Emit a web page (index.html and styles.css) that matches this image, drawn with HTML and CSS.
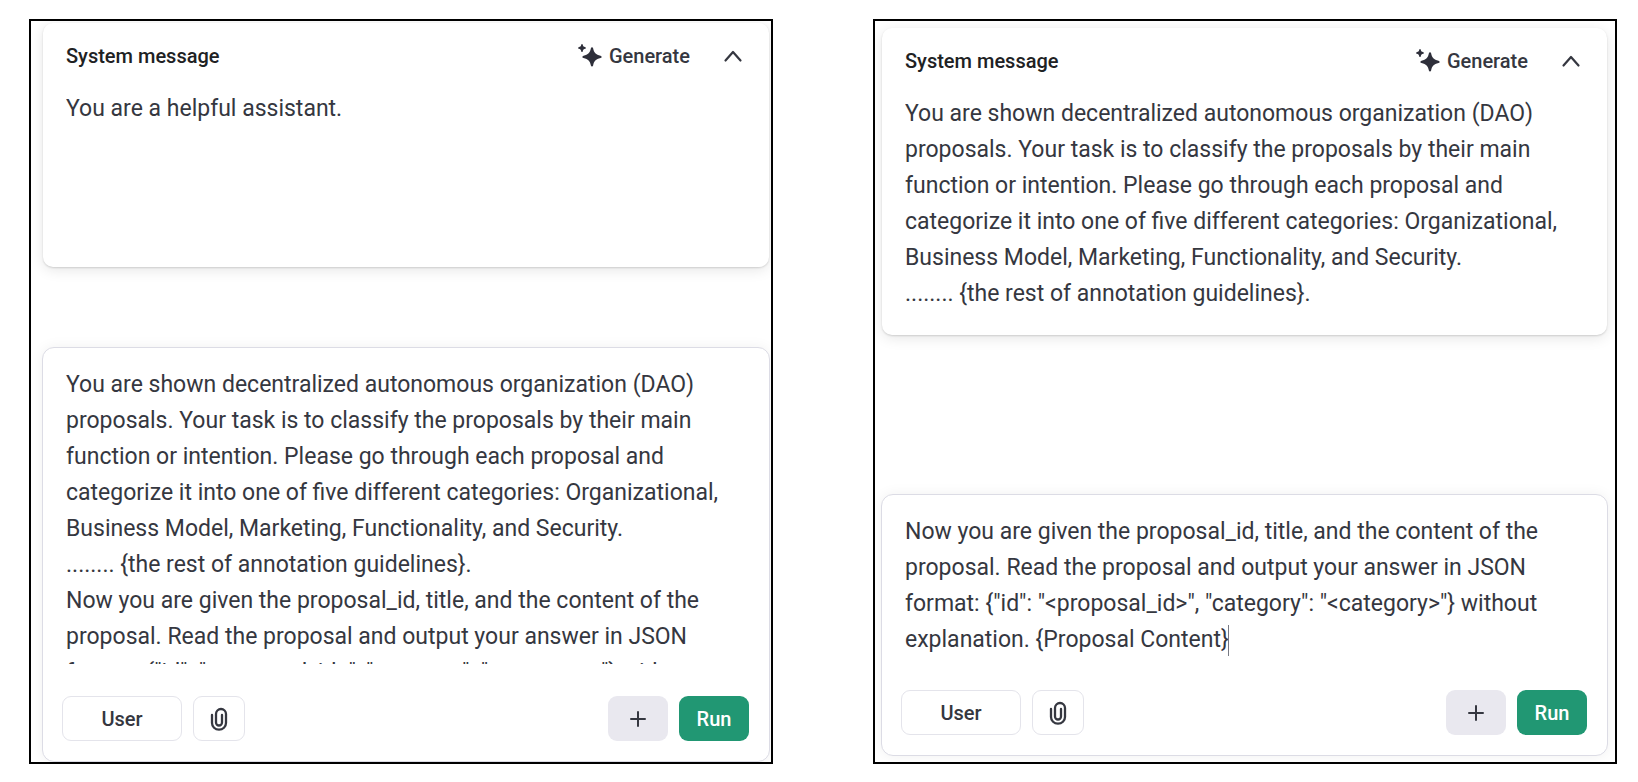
FILE: index.html
```html
<!DOCTYPE html>
<html lang="en">
<head>
<meta charset="utf-8">
<title>Playground</title>
<link rel="stylesheet" href="styles.css">
</head>
<body>
<svg class="sprite" aria-hidden="true">
  <symbol id="sparkle" viewBox="0 0 26 26">
    <path d="M15 4.200c.6 0 .9.300 1.100 1 .9 4.500 2.700 6.300 7.400 7.500 1.500.4 1.500 2 0 2.400-4.700 1.200-6.500 3-7.400 7.500-.2.700-.5 1-1.100 1s-.9-.3-1.100-1c-.9-4.500-2.700-6.300-7.400-7.500-1.500-.4-1.500-2 0-2.400 4.700-1.200 6.500-3 7.400-7.500.2-.7.500-1 1.100-1z"/>
    <path d="M5 1c.4 0 .6.200.7.600.4 1.800 1 2.300 2.600 2.700.8.200.8 1.200 0 1.400-1.600.4-2.200.9-2.600 2.700-.1.400-.3.600-.7.600s-.6-.2-.7-.6C3.900 6.600 3.300 6.100 1.700 5.700c-.8-.2-.8-1.200 0-1.400 1.600-.4 2.200-.9 2.600-2.700.1-.4.3-.6.700-.6z"/>
  </symbol>
  <symbol id="chevron" viewBox="0 0 20 20">
    <path d="M2.500 14.500 10 6l7.500 8.500" fill="none" stroke="currentColor" stroke-width="2.200" stroke-linecap="round" stroke-linejoin="round"/>
  </symbol>
  <symbol id="clip" viewBox="0 0 18 24">
    <path d="M2 8v8a7 6.700 0 0 0 14 0V7a5 5 0 0 0-10 0v8.500a3 3 0 0 0 6 0V8" fill="none" stroke="currentColor" stroke-width="2.300" stroke-linecap="round"/>
  </symbol>
  <symbol id="plus" viewBox="0 0 16 16">
    <path d="M8 1v14M1 8h14" fill="none" stroke="currentColor" stroke-width="2" stroke-linecap="round"/>
  </symbol>
</svg>
<main class="comparison">
  <section class="panel panel-left">
    <div class="system">
      <div class="system-head">
        <label class="system-title" for="system-a">System message</label>
        <button class="ghost" type="button"><svg class="icon-sparkle"><use href="#sparkle"/></svg>Generate</button>
        <button class="ghost collapse" type="button" aria-label="Collapse"><svg class="icon-chevron"><use href="#chevron"/></svg></button>
      </div>
      <textarea class="text text-short" id="system-a">You are a helpful assistant.</textarea>
    </div>
    <div class="composer">
      <textarea class="text text-long" aria-label="User message">You are shown decentralized autonomous organization (DAO) proposals. Your task is to classify the proposals by their main function or intention. Please go through each proposal and categorize it into one of five different categories: Organizational, Business Model, Marketing, Functionality, and Security.
........ {the rest of annotation guidelines}.
Now you are given the proposal_id, title, and the content of the proposal. Read the proposal and output your answer in JSON format: {"id": "&lt;proposal_id&gt;", "category": "&lt;category&gt;"} without explanation. {Proposal Content}</textarea>
      <div class="actions">
        <button class="btn role" type="button">User</button>
        <button class="btn attach" type="button" aria-label="Attach file"><svg class="icon-clip"><use href="#clip"/></svg></button>
        <button class="btn add" type="button" aria-label="Add message"><svg class="icon-plus"><use href="#plus"/></svg></button>
        <button class="btn run" type="button">Run</button>
      </div>
    </div>
  </section>
  <section class="panel panel-right">
    <div class="system">
      <div class="system-head">
        <label class="system-title" for="system-b">System message</label>
        <button class="ghost" type="button"><svg class="icon-sparkle"><use href="#sparkle"/></svg>Generate</button>
        <button class="ghost collapse" type="button" aria-label="Collapse"><svg class="icon-chevron"><use href="#chevron"/></svg></button>
      </div>
      <textarea class="text" id="system-b" rows="6">You are shown decentralized autonomous organization (DAO) proposals. Your task is to classify the proposals by their main function or intention. Please go through each proposal and categorize it into one of five different categories: Organizational, Business Model, Marketing, Functionality, and Security.
........ {the rest of annotation guidelines}.</textarea>
    </div>
    <div class="composer">
      <div class="field">
        <textarea class="text" rows="4" aria-label="User message">Now you are given the proposal_id, title, and the content of the proposal. Read the proposal and output your answer in JSON format: {"id": "&lt;proposal_id&gt;", "category": "&lt;category&gt;"} without explanation. {Proposal Content}</textarea>
        <span class="caret"></span>
      </div>
      <div class="actions">
        <button class="btn role" type="button">User</button>
        <button class="btn attach" type="button" aria-label="Attach file"><svg class="icon-clip"><use href="#clip"/></svg></button>
        <button class="btn add" type="button" aria-label="Add message"><svg class="icon-plus"><use href="#plus"/></svg></button>
        <button class="btn run" type="button">Run</button>
      </div>
    </div>
  </section>
</main>
</body>
</html>
```

FILE: styles.css
```css
* { box-sizing: border-box; }

body {
  margin: 0;
  background: #fff;
  color: #353740;
  font-family: Roboto, "Liberation Sans", sans-serif;
}

.sprite { display: none; }

.comparison {
  display: grid;
  grid-template-columns: 1fr 1fr;
  gap: 100px;
  min-height: 100vh;
  padding: 19px 21px 18px 29px;
}

.panel {
  display: flex;
  flex-direction: column;
  justify-content: space-between;
  min-width: 0;
  border: 2px solid #000;
  overflow: hidden;
}
.panel-left { padding: 2px 1px 0 11px; }
.panel-right { padding: 7px 7px 6px 6px; }

.system {
  margin: 0 1px;
  padding: 13px 23px;
  border-radius: 10px;
  background: #fff;
  box-shadow: 0 1px 2px rgba(0, 0, 0, .14), 0 3px 14px rgba(0, 0, 0, .1);
}
.panel-right .system { padding-bottom: 23px; }

.system-head {
  display: flex;
  align-items: center;
  height: 40px;
  margin-bottom: 15px;
}
.system-title {
  flex: 1;
  color: #202123;
  font-size: 20px;
  font-weight: 500;
}

.ghost {
  display: flex;
  align-items: center;
  gap: 6px;
  padding: 0;
  border: 0;
  background: none;
  color: #353740;
  font: 500 20px Roboto, "Liberation Sans", sans-serif;
}
.collapse { margin: 0 3px 0 33px; }

.icon-sparkle { width: 26px; height: 26px; fill: #2e2f3a; }
.icon-chevron { width: 20px; height: 20px; }
.icon-clip { width: 18px; height: 24px; }
.icon-plus { width: 16px; height: 16px; }

.text {
  display: block;
  width: 100%;
  padding: 0;
  border: 0;
  outline: 0;
  resize: none;
  overflow: hidden;
  background: transparent;
  color: #353740;
  font: 23px/36px Roboto, "Liberation Sans", sans-serif;
}
.text-short { height: 163px; }
.text-long { height: 297px; }

.composer {
  padding: 19px 20px 20px 19px;
  border: 1px solid #dcdce5;
  border-radius: 12px;
  background: #fff;
  box-shadow: 0 0 14px rgba(0, 0, 0, .06);
}
.composer .text { padding: 0 4px; }

.field { position: relative; }
.caret {
  position: absolute;
  left: 327px;
  bottom: 2px;
  width: 1px;
  height: 31px;
  background: #777983;
}

.actions {
  display: flex;
  gap: 11px;
  margin-top: 32px;
}
.btn {
  display: flex;
  align-items: center;
  justify-content: center;
  height: 45px;
  padding: 0;
  border: 1px solid #e4e4eb;
  border-radius: 9px;
  background: #fff;
  color: #353740;
  font: 500 20px Roboto, "Liberation Sans", sans-serif;
}
.role { width: 120px; }
.attach { width: 52px; }
.add { width: 60px; margin-left: auto; border: 0; background: #e9e8ef; }
.run { width: 70px; border: 0; background: #219773; color: #fff; }
```
